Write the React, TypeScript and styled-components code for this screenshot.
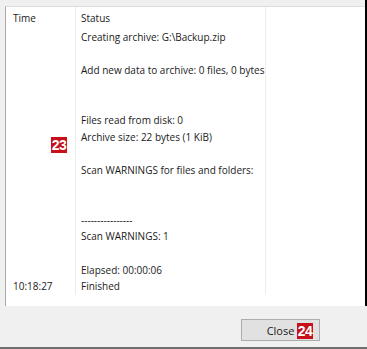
import React from "react";
import styled, { createGlobalStyle } from "styled-components";

const Global = createGlobalStyle`
  html, body { margin: 0; padding: 0; background: #f0f0f0; }
  body { font-family: "Open Sans", "Noto Sans", sans-serif; }
`;

const Window = styled.div`
  width: 367px;
  height: 349px;
  display: flex;
  flex-direction: column;
  background: #f0f0f0;
  overflow: hidden;
`;

const Top = styled.div`
  height: 306px;
  box-sizing: border-box;
  padding: 6px 0 0 5px;
  border-right: 2px solid #000;
  display: flex;
`;

const ListBox = styled.div`
  position: relative;
  flex: 1;
  background: #fff;
  border-left: 1px solid #a8a8a8;
  border-top: 1px solid #dcdcdc;
  display: flex;
  flex-direction: column;
  font-size: 10px;
  color: #1a1a1a;
`;

const Row = styled.div<{ $header?: boolean }>`
  display: grid;
  grid-template-columns: 70px 190px 1fr;
  height: ${(p) => (p.$header ? "22px" : "16.6px")};
  align-items: center;
`;

const Cell = styled.div<{ $last?: boolean }>`
  height: 100%;
  display: flex;
  align-items: center;
  padding-left: ${(p) => (p.$last ? "0" : "5px")};
  border-right: ${(p) => (p.$last ? "none" : "1px solid #ececec")};
  white-space: nowrap;
  box-sizing: border-box;
  line-height: 1;
`;

const TimeCell = styled(Cell)`
  padding-left: 7px;
`;

const Badge = styled.div`
  position: absolute;
  width: 16px;
  height: 16px;
  background: #c8101a;
  color: #fff;
  font-family: "Liberation Sans", Arial, sans-serif;
  font-weight: bold;
  font-size: 14px;
  letter-spacing: -0.5px;
  display: flex;
  align-items: center;
  justify-content: center;
`;

const ListBadge = styled(Badge)`
  left: 45px;
  top: 130px;
`;

const Footer = styled.div`
  flex: 1;
  display: flex;
  justify-content: flex-end;
  align-items: flex-start;
  padding: 13px 47px 0 0;
  border-bottom: 2px solid #6e6e6e;
`;

const Button = styled.div`
  position: relative;
  width: 79px;
  height: 22px;
  box-sizing: border-box;
  background: #e1e1e1;
  border: 1px solid #adadad;
  display: flex;
  align-items: center;
  justify-content: center;
  font-size: 11px;
  color: #1a1a1a;
`;

const ButtonBadge = styled(Badge)`
  left: 55px;
  top: 3px;
`;

const rows: [string, string][] = [
  ["", "Creating archive: G:\\Backup.zip"],
  ["", ""],
  ["", "Add new data to archive: 0 files, 0 bytes"],
  ["", ""],
  ["", ""],
  ["", "Files read from disk: 0"],
  ["", "Archive size: 22 bytes (1 KiB)"],
  ["", ""],
  ["", "Scan WARNINGS for files and folders:"],
  ["", ""],
  ["", ""],
  ["", "----------------"],
  ["", "Scan WARNINGS: 1"],
  ["", ""],
  ["", "Elapsed: 00:00:06"],
  ["10:18:27", "Finished"],
];

export default function App() {
  return (
    <Window>
      <Global />
      <Top>
        <ListBox>
          <Row $header>
            <TimeCell>Time</TimeCell>
            <Cell>Status</Cell>
            <Cell $last />
          </Row>
          {rows.map(([t, s], i) => (
            <Row key={i}>
              <TimeCell>{t}</TimeCell>
              <Cell>{s}</Cell>
              <Cell $last />
            </Row>
          ))}
          <ListBadge>23</ListBadge>
        </ListBox>
      </Top>
      <Footer>
        <Button>
          Close
          <ButtonBadge>24</ButtonBadge>
        </Button>
      </Footer>
    </Window>
  );
}
